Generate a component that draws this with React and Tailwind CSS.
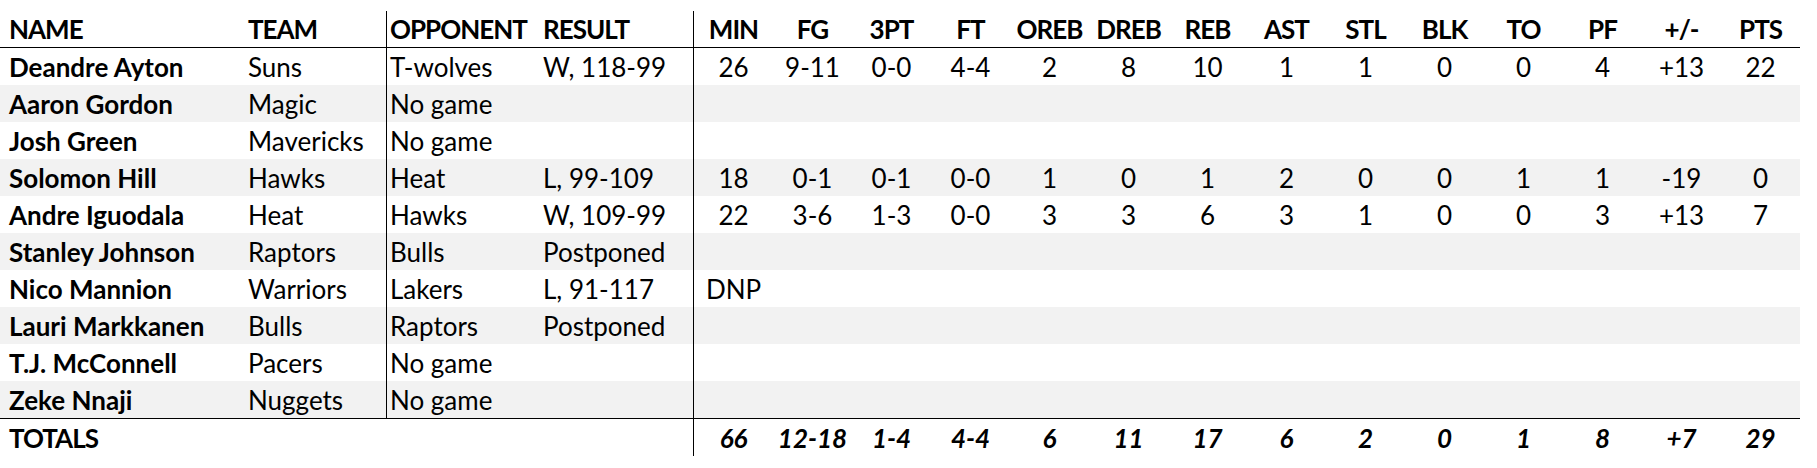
import React from 'react'

const INFO_COLS = [
  { key: 'name',     label: 'NAME',     cls: 'w-[240px] pl-[9px] font-bold' },
  { key: 'team',     label: 'TEAM',     cls: 'w-[146px] pl-[8px]' },
  { key: 'opponent', label: 'OPPONENT', cls: 'w-[149px] pl-[3px] border-l border-black' },
  { key: 'result',   label: 'RESULT',   cls: 'w-[158px] pl-[8px]' },
]

const STAT_COLS = ['MIN', 'FG', '3PT', 'FT', 'OREB', 'DREB', 'REB', 'AST', 'STL', 'BLK', 'TO', 'PF', '+/-', 'PTS']

const ROWS = [
  { name: 'Deandre Ayton',   team: 'Suns',      opponent: 'T-wolves', result: 'W, 118-99',
    stats: ['26', '9-11', '0-0', '4-4', '2', '8', '10', '1', '1', '0', '0', '4', '+13', '22'] },
  { name: 'Aaron Gordon',    team: 'Magic',     opponent: 'No game',  result: '' },
  { name: 'Josh Green',      team: 'Mavericks', opponent: 'No game',  result: '' },
  { name: 'Solomon Hill',    team: 'Hawks',     opponent: 'Heat',     result: 'L, 99-109',
    stats: ['18', '0-1', '0-1', '0-0', '1', '0', '1', '2', '0', '0', '1', '1', '-19', '0'] },
  { name: 'Andre Iguodala',  team: 'Heat',      opponent: 'Hawks',    result: 'W, 109-99',
    stats: ['22', '3-6', '1-3', '0-0', '3', '3', '6', '3', '1', '0', '0', '3', '+13', '7'] },
  { name: 'Stanley Johnson', team: 'Raptors',   opponent: 'Bulls',    result: 'Postponed' },
  { name: 'Nico Mannion',    team: 'Warriors',  opponent: 'Lakers',   result: 'L, 91-117', stats: ['DNP'] },
  { name: 'Lauri Markkanen', team: 'Bulls',     opponent: 'Raptors',  result: 'Postponed' },
  { name: 'T.J. McConnell',  team: 'Pacers',    opponent: 'No game',  result: '' },
  { name: 'Zeke Nnaji',      team: 'Nuggets',   opponent: 'No game',  result: '' },
]

const TOTALS = ['66', '12-18', '1-4', '4-4', '6', '11', '17', '6', '2', '0', '1', '8', '+7', '29']

// one stat cell; the first one carries the divider line
function StatCell({ i, children, className }) {
  return (
    <div
      className={
        (i === 0 ? 'w-[80px] border-l border-black ' : 'w-[79px] ') +
        'flex items-center justify-center ' + (className || '')
      }
    >
      {children}
    </div>
  )
}

export default function App() {
  return (
    <div
      className="w-[1817px] h-[468px] bg-white text-black pt-[11px] text-[26px] leading-none"
      style={{ fontFamily: 'Lato, "Open Sans", sans-serif' }}
    >
      <div className="w-[1800px] flex flex-col">
        {/* ── Header ─────────────────────────────────────────────── */}
        <div className="flex h-[37px] border-b border-black font-bold tracking-[-1px]">
          {INFO_COLS.map((c) => (
            <div key={c.key} className={c.cls + ' flex items-center'}>{c.label}</div>
          ))}
          {STAT_COLS.map((s, i) => (
            <StatCell key={s} i={i}>{s}</StatCell>
          ))}
        </div>

        {/* ── Players ────────────────────────────────────────────── */}
        {ROWS.map((r, idx) => (
          <div key={r.name} className={'flex h-[37px] ' + (idx % 2 === 1 ? 'bg-[#f2f2f2]' : 'bg-white')}>
            {INFO_COLS.map((c) => (
              <div key={c.key} className={c.cls + ' flex items-center'}>{r[c.key]}</div>
            ))}
            {STAT_COLS.map((s, i) => (
              <StatCell key={s} i={i}>{r.stats ? r.stats[i] : ''}</StatCell>
            ))}
          </div>
        ))}

        {/* ── Totals ─────────────────────────────────────────────── */}
        <div className="flex h-[38px] border-t border-black font-bold">
          <div className="w-[693px] pl-[9px] flex items-center tracking-[-1px]">TOTALS</div>
          {TOTALS.map((t, i) => (
            <StatCell key={STAT_COLS[i]} i={i} className="italic">{t}</StatCell>
          ))}
        </div>
      </div>
    </div>
  )
}
